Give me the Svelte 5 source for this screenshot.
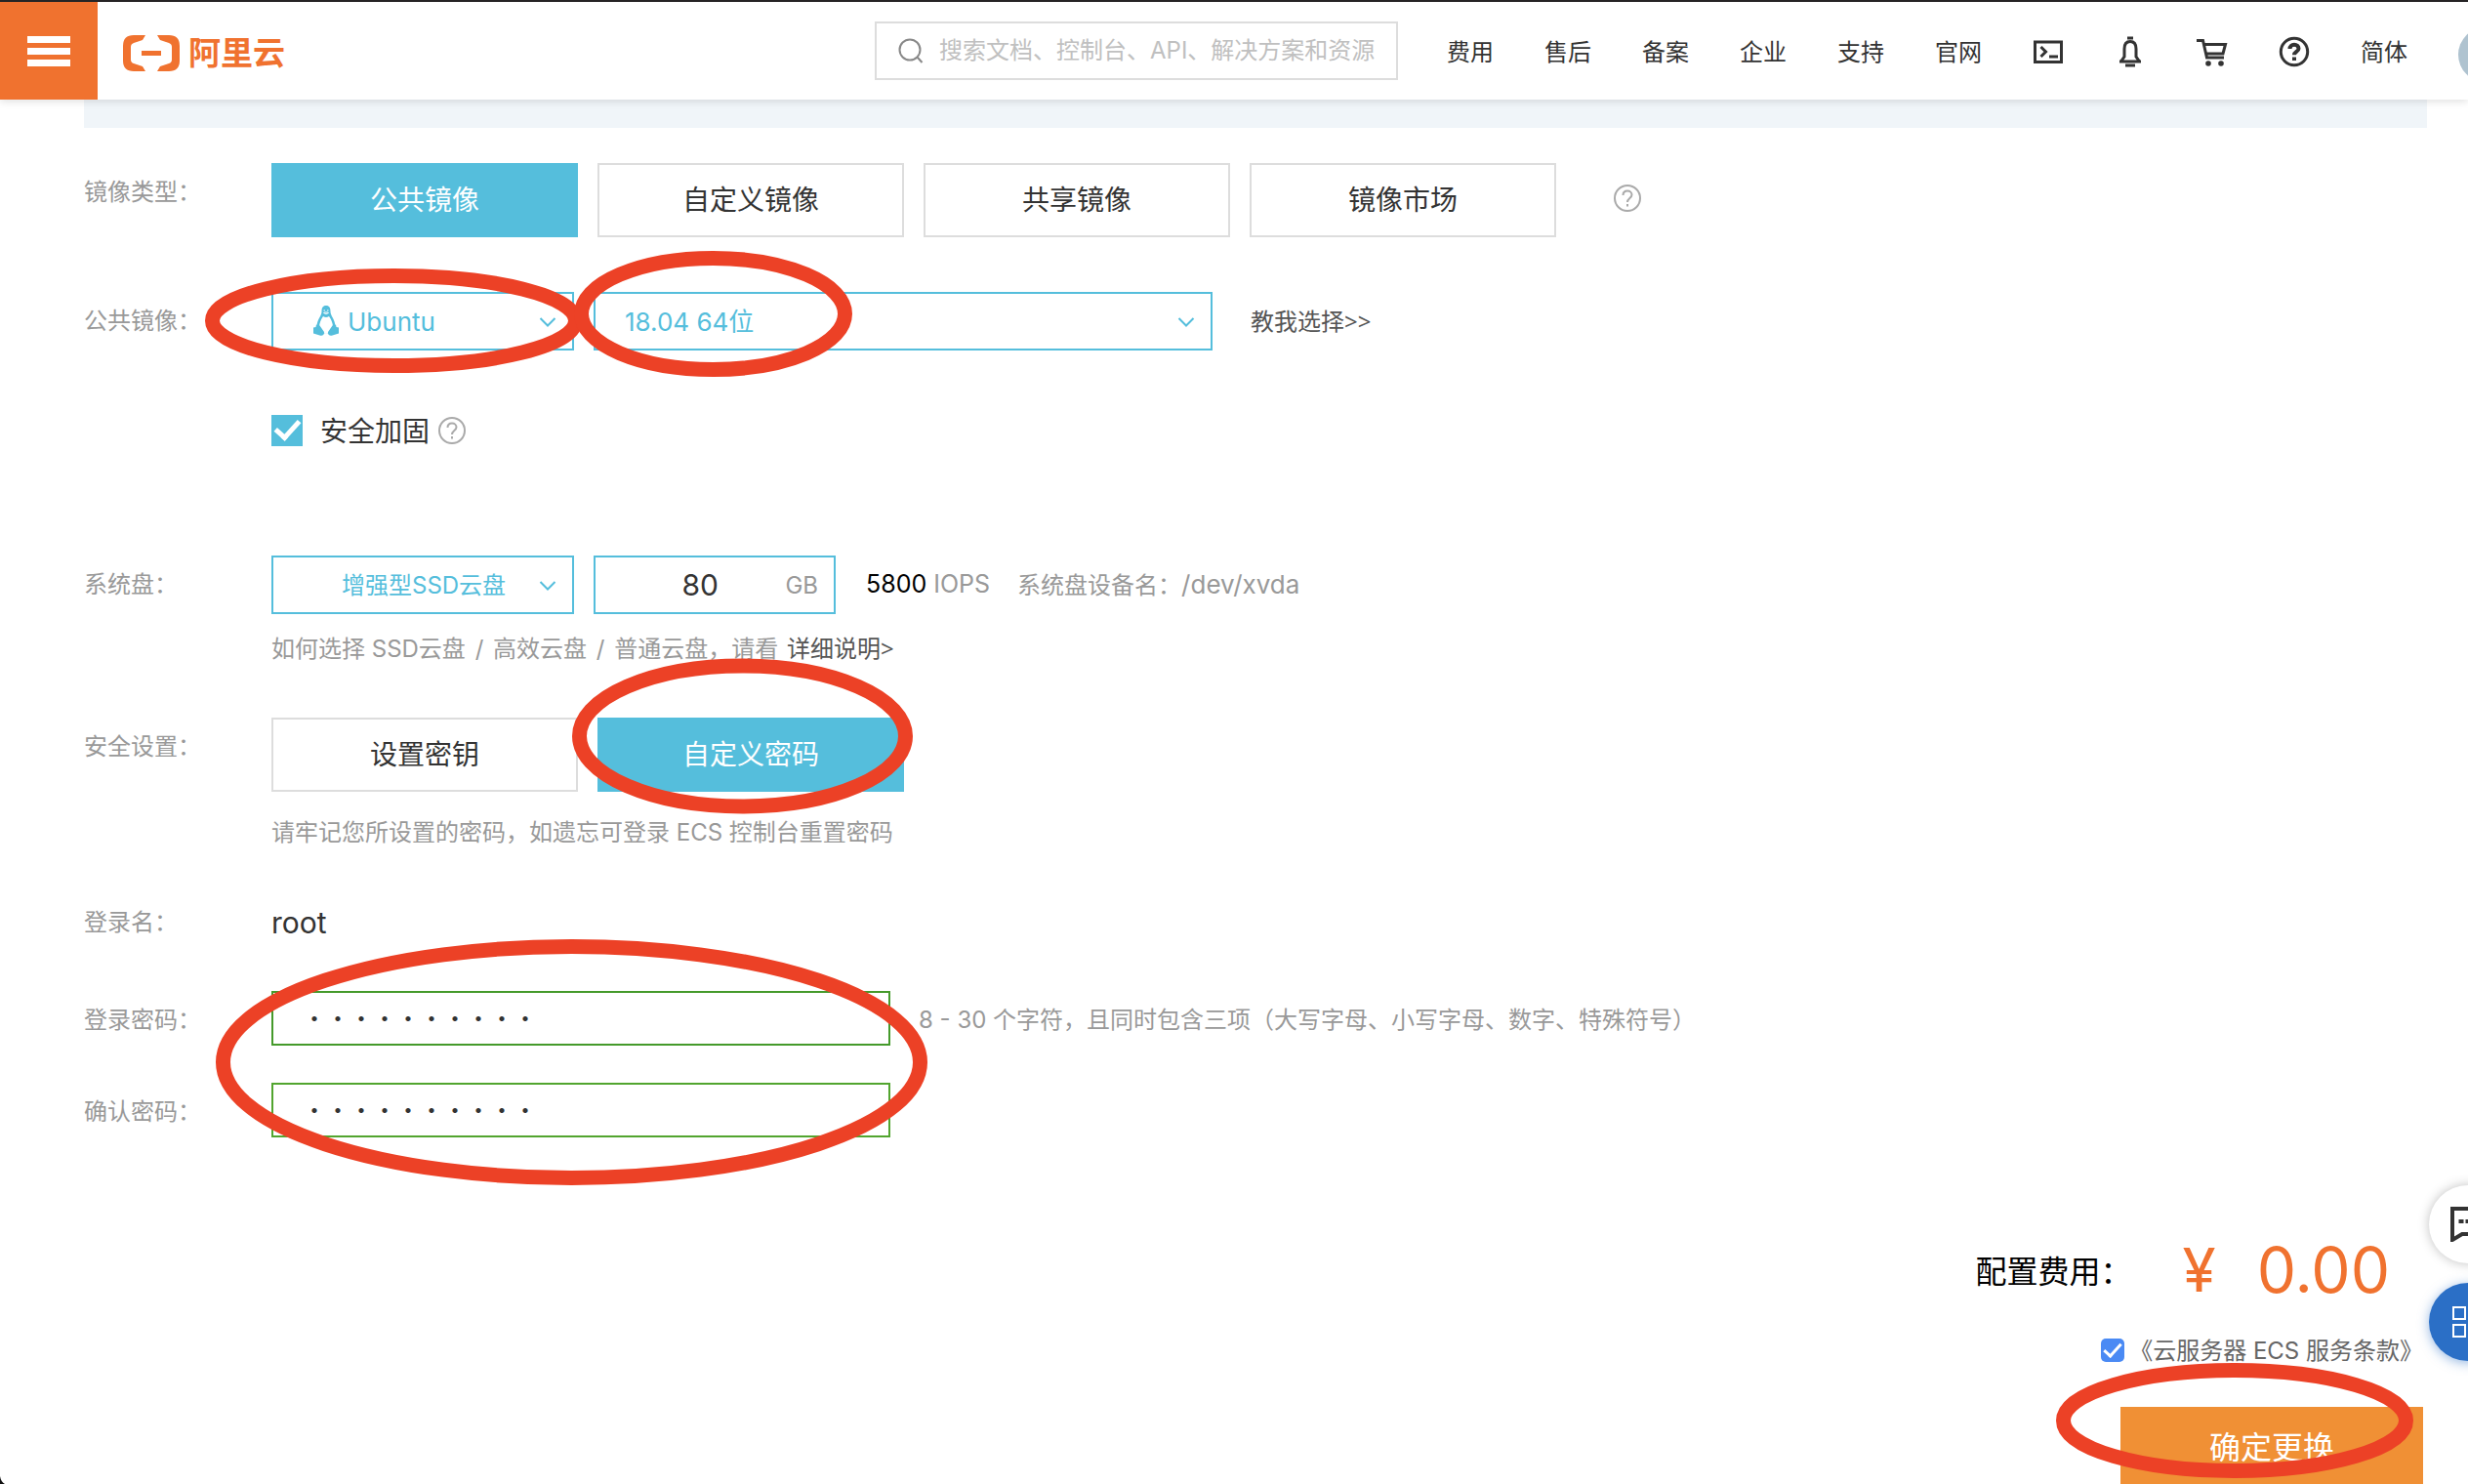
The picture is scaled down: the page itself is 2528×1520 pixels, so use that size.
<script>
  const navLinks = ['费用', '售后', '备案', '企业', '支持', '官网'];
  const imageTypes = ['公共镜像', '自定义镜像', '共享镜像', '镜像市场'];
  const authModes = ['设置密钥', '自定义密码'];

  let imageType = $state('公共镜像');
  let authMode = $state('自定义密码');
  let hardened = $state(true);
  let agreed = $state(true);
  let size = $state('80');
  let password = $state('Abcd123456');
  let confirmation = $state('Abcd123456');
</script>

{#snippet help()}
  <svg class="help" viewBox="0 0 28 28" aria-hidden="true">
    <circle cx="14" cy="14" r="13" />
    <path d="M9.500 11c0-2.700 1.900-4.500 4.500-4.500s4.500 1.700 4.500 4.100c0 3.400-4.500 3.600-4.500 7.400M14 20v2.500" />
  </svg>
{/snippet}

{#snippet chevron()}
  <svg class="chevron" viewBox="0 0 18 10" aria-hidden="true"><path d="M1.500 1 9 8.500 16.500 1" /></svg>
{/snippet}

<div class="page">
  <header>
    <button class="burger" aria-label="菜单"><i></i><i></i><i></i></button>
    <a class="brand" href="#home">
      <svg viewBox="0 0 58 37" aria-hidden="true">
        <path d="M23 0H11Q0 0 0 11v15q0 11 11 11h12l-3-5-9-3q-3-1-3-4V12q0-3 3-4l9-3zM35 0h12q11 0 11 11v15q0 11-11 11H35l3-5 9-3q3-1 3-4V12q0-3-3-4l-9-3zM19 16h20v5H19z" />
      </svg>
      <span>阿里云</span>
    </a>
    <div class="tools">
      <label class="search">
        <svg viewBox="0 0 26 26" aria-hidden="true"><circle cx="12" cy="12" r="10.500" /><path d="m19.500 19.500 5 5.500" /></svg>
        <input type="text" aria-label="搜索" placeholder="搜索文档、控制台、API、解决方案和资源" />
      </label>
      <nav>
        {#each navLinks as link}
          <a href="#nav">{link}</a>
        {/each}
        <button aria-label="终端">
          <svg viewBox="0 0 32 32"><path d="M2.500 6h27v20.500h-27z" /><path d="m8.500 11 5 5-5 5M17 21h9" /></svg>
        </button>
        <button aria-label="通知">
          <svg viewBox="0 0 32 32"><path d="M13 2h6M5 26h22M6.500 26l3.500-5v-8c0-5 2-7.500 6-7.500s6 2.500 6 7.500v8l3.500 5M11 30h10" /></svg>
        </button>
        <button aria-label="购物车">
          <svg viewBox="0 0 32 32"><path d="M0 4.500h6.500l4 17.500H28M7.500 8.500h22l-2.500 9.500H10" /><circle class="dot" cx="12" cy="28" r="2.800" /><circle class="dot" cx="25" cy="28" r="2.800" /></svg>
        </button>
        <button aria-label="帮助">
          <svg viewBox="0 0 32 32"><circle cx="16" cy="16" r="13.700" /><path class="heavy" d="M11.500 13c0-2.700 1.900-4.200 4.500-4.200s4.500 1.500 4.500 3.900c0 3.200-4.500 3.200-4.500 6.500M16 21.500v3.500" /></svg>
        </button>
        <a href="#lang">简体</a>
        <a class="avatar" href="#me" aria-label="账号"></a>
      </nav>
    </div>
  </header>

  <main>
    <div class="strip"></div>

    <section class="row first">
      <span class="label">镜像类型：</span>
      <div class="line">
        {#each imageTypes as t}
          <button class="choice" class:active={imageType === t} onclick={() => (imageType = t)}>{t}</button>
        {/each}
        <span class="tip">{@render help()}</span>
      </div>
    </section>

    <section class="row image">
      <label class="label" for="os">公共镜像：</label>
      <div>
        <div class="line">
          <div class="select os">
            <svg class="tux" viewBox="0 0 26 31" aria-hidden="true">
              <path class="body" d="M13 0C9.500 0 8.500 2.500 8.500 6c0 4.500-4.500 8-5 15l3 8h13l3-8c-.5-7-5-10.500-5-15 0-3.500-1-6-4.500-6z" />
              <path class="belly" d="M10 11c-2 2.500-4 7-4 11l3 6q4 2 8 0l3-6c0-4-2-8.500-4-11q-3 2-6 0z" />
              <path class="body" d="M3 19.500l3.500 1 4.500 6.500c.5 3-2 4.500-4.500 3.500L0 28.500 0 22.500l2.500-.5zM23 19.500l-3.500 1-4.500 6.500c-.5 3 2 4.500 4.500 3.500l6.500-2v-6l-2.500-.5z" />
              <path class="beak" d="M10.500 5h1.500M14 5h1.500M10.500 7.500q2.500-1.500 5 0-2.500 2-5 0z" />
            </svg>
            <select id="os"><option>Ubuntu</option></select>
            {@render chevron()}
            <svg class="ring ring-os" viewBox="0 0 387 107" aria-hidden="true"><ellipse cx="193.500" cy="53.500" rx="186" ry="46" /></svg>
          </div>
          <div class="select version">
            <select aria-label="系统版本"><option>18.04 64位</option></select>
            {@render chevron()}
            <svg class="ring ring-version" viewBox="0 0 285 129" aria-hidden="true"><ellipse cx="142.500" cy="64.500" rx="135" ry="57" /></svg>
          </div>
          <a class="guide" href="#guide">教我选择<span class="gt">&gt;&gt;</span></a>
        </div>
        <div class="harden">
          <label><input type="checkbox" bind:checked={hardened} /><span>安全加固</span></label>
          {@render help()}
        </div>
      </div>
    </section>

    <section class="row disk">
      <label class="label" for="disk">系统盘：</label>
      <div>
        <div class="line">
          <div class="select kind">
            <select id="disk"><option>增强型SSD云盘</option></select>
            {@render chevron()}
          </div>
          <label class="size">
            <input type="text" aria-label="容量" bind:value={size} />
            <span>GB</span>
          </label>
          <p class="iops"><b>5800</b> IOPS</p>
          <p class="device">系统盘设备名：<span class="path">/dev/xvda</span></p>
        </div>
        <p class="note">
          如何选择 SSD云盘 <span class="sep">/</span> 高效云盘 <span class="sep">/</span> 普通云盘，请看
          <a href="#detail">详细说明<span class="gt">&gt;</span></a>
        </p>
      </div>
    </section>

    <section class="row security">
      <span class="label">安全设置：</span>
      <div>
        <div class="line">
          {#each authModes as m}
            <button class="choice" class:active={authMode === m} onclick={() => (authMode = m)}>{m}</button>
          {/each}
          <svg class="ring ring-mode" viewBox="0 0 349 160" aria-hidden="true"><ellipse cx="174.500" cy="80" rx="167" ry="72" /></svg>
        </div>
        <p class="note">请牢记您所设置的密码，如遗忘可登录 ECS 控制台重置密码</p>
      </div>
    </section>

    <section class="row login">
      <span class="label">登录名：</span>
      <strong>root</strong>
    </section>

    <section class="row secret">
      <label class="label" for="pw">登录密码：</label>
      <div class="line">
        <input id="pw" class="password" type="password" bind:value={password} />
        <p class="rule">8 - 30 个字符，且同时包含三项（大写字母、小写字母、数字、特殊符号）</p>
        <svg class="ring ring-password" viewBox="0 0 729 252" aria-hidden="true"><ellipse cx="364.500" cy="126" rx="357" ry="118.500" /></svg>
      </div>
    </section>

    <section class="row confirm">
      <label class="label" for="pw2">确认密码：</label>
      <input id="pw2" class="password light" type="password" bind:value={confirmation} />
    </section>
  </main>

  <footer>
    <p class="price"><span>配置费用：</span><i>¥</i><b>0.00</b></p>
    <label class="terms"><input type="checkbox" bind:checked={agreed} /><span>《云服务器 ECS 服务条款》</span></label>
    <div class="submit">
      <button>确定更换</button>
      <svg class="ring ring-submit" viewBox="0 0 366 118" aria-hidden="true"><ellipse cx="183" cy="59" rx="175.500" ry="51.500" /></svg>
    </div>
  </footer>

  <aside>
    <button aria-label="咨询">
      <svg viewBox="0 0 36 36"><path d="M2 2h32v26H12L2 34z" /><path d="M8.500 15h5M15.500 15h5M22.500 15h5" /></svg>
    </button>
    <button class="blue" aria-label="应用">
      <svg viewBox="0 0 36 36"><path d="M5 3h12v12H5zM5 21h12v12H5zM23 3h12v12H23zM23 21h12v12H23z" /></svg>
    </button>
  </aside>

  <svg class="corner" viewBox="0 0 6 8" aria-hidden="true"><path d="M0 0q1 6 5 8H0z" /></svg>
</div>

<style>
  :global(body) {
    margin: 0;
    background: #fff;
  }

  .page {
    position: relative;
    display: flex;
    flex-direction: column;
    height: 100vh;
    overflow: hidden;
    box-sizing: border-box;
    border-top: 2px solid #262425;
    font-family: Inter, 'Noto Sans CJK SC', sans-serif;
    font-size: 24px;
    color: #999;
  }

  .page :global(*) {
    box-sizing: border-box;
  }

  p {
    margin: 0;
  }

  a {
    color: #555;
    text-decoration: none;
  }

  button,
  input,
  select {
    margin: 0;
    padding: 0;
    border: 0;
    border-radius: 0;
    background: none;
    font: inherit;
    color: inherit;
    outline: 0;
  }

  svg {
    flex: none;
    fill: none;
  }

  header {
    position: relative;
    z-index: 2;
    flex: none;
    display: flex;
    align-items: center;
    height: 100px;
    background: #fff;
    box-shadow: 0 2px 8px rgba(0, 0, 0, 0.12);
  }

  .burger {
    display: flex;
    flex-direction: column;
    align-items: center;
    justify-content: center;
    gap: 5px;
    width: 100px;
    height: 100px;
    background: #f0722f;
  }

  .burger i {
    width: 44px;
    height: 7px;
    background: #fff;
  }

  .brand {
    display: flex;
    align-items: center;
    gap: 9px;
    padding: 4px 0 0 26px;
    font-size: 33px;
    line-height: 40px;
    font-weight: 700;
    color: #f0722f;
  }

  .brand svg {
    width: 58px;
    height: 37px;
    fill: #f0722f;
  }

  .tools {
    display: flex;
    align-items: center;
    gap: 50px;
    margin: 0 -46px 0 auto;
  }

  .search {
    display: flex;
    align-items: center;
    gap: 16px;
    width: 536px;
    height: 60px;
    padding: 0 22px;
    border: 2px solid #ddd;
  }

  .search svg {
    width: 26px;
    height: 26px;
    stroke: #888;
    stroke-width: 2;
  }

  .search input {
    flex: 1;
    min-width: 0;
    padding-bottom: 2px;
  }

  .search input::placeholder {
    color: #c0c0c0;
    opacity: 1;
  }

  nav {
    display: flex;
    align-items: center;
    gap: 52px;
  }

  nav a {
    padding-bottom: 2px;
    color: #333;
    white-space: nowrap;
  }

  nav button {
    display: flex;
  }

  nav svg {
    width: 32px;
    height: 32px;
    margin-top: 2px;
    stroke: #333;
    stroke-width: 3;
  }

  nav .heavy {
    stroke-width: 4;
  }

  nav .dot {
    fill: #333;
    stroke: none;
  }

  .avatar {
    width: 56px;
    height: 56px;
    margin-top: 8px;
    border-radius: 50%;
    background: #afc3d0;
  }

  main {
    flex: none;
    padding: 0 42px 0 86px;
  }

  .strip {
    height: 29px;
    background: #f0f5f9;
  }

  .row {
    display: grid;
    grid-template-columns: 192px 1fr;
    align-items: start;
  }

  .label {
    padding-top: 2px;
    line-height: 56px;
    white-space: nowrap;
  }

  .line {
    position: relative;
    display: flex;
    align-items: center;
    gap: 20px;
  }

  .first {
    margin-top: 36px;
  }

  .image {
    margin-top: 56px;
  }

  .disk {
    margin-top: 112px;
  }

  .security {
    margin-top: 54px;
  }

  .login {
    margin-top: 46px;
  }

  .secret {
    margin-top: 42px;
  }

  .confirm {
    margin-top: 36px;
  }

  .choice {
    width: 314px;
    height: 76px;
    padding-bottom: 4px;
    border: 2px solid #ddd;
    font-size: 28px;
    color: #333;
  }

  .choice.active {
    border-color: #55bedc;
    background: #55bedc;
    color: #fff;
  }

  .help {
    width: 28px;
    height: 28px;
    stroke: #aaa;
    stroke-width: 2;
  }

  .tip {
    display: flex;
    margin-left: 39px;
    padding-bottom: 4px;
  }

  .select {
    position: relative;
    height: 60px;
  }

  .select select {
    appearance: none;
    width: 100%;
    height: 60px;
    border: 2px solid #55bedc;
    color: #55bedc;
  }

  .os,
  .kind {
    width: 310px;
  }

  .os select {
    padding-left: 76px;
    font-size: 26px;
  }

  .kind select {
    padding-left: 70px;
  }

  .version {
    width: 634px;
  }

  .version select {
    padding-left: 30px;
    font-size: 26px;
  }

  .chevron {
    position: absolute;
    top: 26px;
    right: 18px;
    width: 18px;
    height: 10px;
    stroke: #55bedc;
    stroke-width: 2;
    pointer-events: none;
  }

  .tux {
    position: absolute;
    top: 14px;
    left: 43px;
    width: 26px;
    height: 31px;
    pointer-events: none;
  }

  .tux .body {
    fill: #55bedc;
  }

  .tux .belly {
    fill: #fff;
  }

  .tux .beak {
    stroke: #fff;
  }

  .guide {
    margin-left: 19px;
    padding-bottom: 4px;
  }

  .gt {
    font-family: 'Noto Sans', sans-serif;
    line-height: 1;
  }

  .harden {
    display: flex;
    align-items: center;
    gap: 9px;
    margin-top: 66px;
    height: 32px;
    font-size: 28px;
    color: #333;
  }

  .harden label {
    display: flex;
    align-items: center;
    gap: 18px;
  }

  .harden span {
    padding-bottom: 3px;
  }

  input[type='checkbox'] {
    appearance: none;
    display: grid;
    place-items: center;
    width: 32px;
    height: 32px;
    background: #55bedc;
  }

  input[type='checkbox']::before {
    content: '';
    width: 20px;
    height: 10px;
    margin-bottom: 7px;
    border: solid #fff;
    border-width: 0 0 5px 5px;
    transform: rotate(-48deg);
  }

  .size {
    display: flex;
    align-items: center;
    width: 248px;
    height: 60px;
    padding-right: 16px;
    border: 2px solid #55bedc;
  }

  .size input {
    flex: 1;
    min-width: 0;
    padding-left: 20px;
    font-size: 30px;
    color: #333;
    text-align: center;
  }

  .iops {
    margin-left: 11px;
    padding-bottom: 3px;
    font-size: 25px;
  }

  .iops b {
    font-weight: 400;
    color: #000;
  }

  .device {
    margin-left: 8px;
    padding-bottom: 3px;
  }

  .path {
    font-size: 26px;
    line-height: 1;
  }

  .note {
    margin-top: 20px;
    line-height: 32px;
  }

  .sep {
    margin: 0 3px;
  }

  .note a {
    margin-left: 2px;
  }

  .security .note {
    margin-top: 26px;
  }

  .login strong {
    padding-top: 2px;
    font-size: 30px;
    line-height: 56px;
    font-weight: 400;
    color: #333;
  }

  .password {
    width: 634px;
    height: 56px;
    padding: 0 30px 3px;
    border: 2px solid #459a2b;
    font-family: 'Noto Sans CJK SC', sans-serif;
    color: #333;
  }

  .password.light {
    border-color: #52a52f;
  }

  .rule {
    margin-left: 9px;
    padding-bottom: 2px;
  }

  footer {
    flex: none;
    display: flex;
    flex-direction: column;
    align-items: flex-end;
    margin-top: 93px;
    padding-right: 46px;
  }

  .price {
    display: flex;
    align-items: center;
    height: 80px;
    margin-right: 34px;
    color: #f0722f;
  }

  .price span {
    font-size: 32px;
    color: #000;
  }

  .price i {
    margin: 0 42px 0 52px;
    font-size: 62px;
    font-style: normal;
  }

  .price b {
    font-size: 64px;
    font-weight: 400;
  }

  .terms {
    display: flex;
    align-items: center;
    gap: 5px;
    height: 32px;
    margin-top: 27px;
    color: #666;
  }

  .terms span {
    padding-bottom: 3px;
  }

  .terms input {
    width: 24px;
    height: 24px;
    border-radius: 5px;
    background: #4a8af4;
  }

  .terms input::before {
    width: 15px;
    height: 7px;
    margin-bottom: 5px;
    border-width: 0 0 3px 3px;
  }

  .submit {
    position: relative;
    margin-top: 42px;
  }

  .submit button {
    width: 310px;
    height: 82px;
    padding-bottom: 5px;
    background: #f09035;
    font-size: 32px;
    color: #fff;
  }

  .ring {
    position: absolute;
    z-index: 1;
    stroke: #ec4126;
    stroke-width: 15;
    pointer-events: none;
  }

  .ring-os {
    top: -24px;
    left: -68px;
    width: 387px;
    height: 107px;
  }

  .ring-version {
    top: -42px;
    left: -20px;
    width: 285px;
    height: 129px;
  }

  .ring-mode {
    top: -61px;
    left: 308px;
    width: 349px;
    height: 160px;
  }

  .ring-password {
    top: -53px;
    left: -57px;
    width: 729px;
    height: 252px;
  }

  .ring-submit {
    top: -45px;
    left: -66px;
    width: 366px;
    height: 118px;
  }

  aside {
    position: absolute;
    right: -40px;
    bottom: 126px;
    display: flex;
    flex-direction: column;
    gap: 20px;
  }

  aside button {
    display: flex;
    align-items: center;
    padding-left: 22px;
    width: 80px;
    height: 80px;
    border-radius: 50%;
    background: #fff;
    box-shadow: 0 0 12px rgba(0, 0, 0, 0.25);
  }

  aside svg {
    width: 36px;
    height: 36px;
    stroke: #333;
    stroke-width: 4;
  }

  aside .blue {
    background: #2b6fc6;
    box-shadow: 0 2px 12px rgba(43, 111, 198, 0.5);
  }

  aside .blue svg {
    margin-left: -2px;
    stroke: #fff;
    stroke-width: 2;
  }

  .corner {
    position: absolute;
    left: 0;
    bottom: 0;
    width: 6px;
    height: 8px;
    fill: #111;
  }
</style>
